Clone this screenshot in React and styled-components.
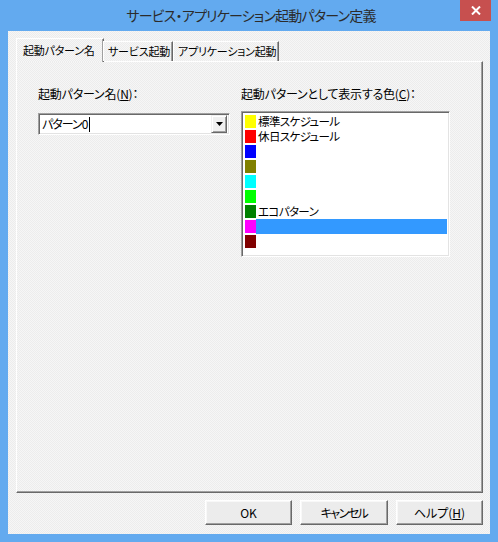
import React from 'react';
import styled, { createGlobalStyle } from 'styled-components';

const Global = createGlobalStyle`
  html, body { margin: 0; padding: 0; }
  body {
    width: 498px;
    height: 542px;
    overflow: hidden;
    font-family: "Noto Sans CJK JP", "Liberation Sans", sans-serif;
    font-feature-settings: "palt";
  }
`

const checker = `repeating-conic-gradient(#ececec 0 25%, #f6f6f6 0 50%) 0 0 / 2px 2px`

const Window = styled.div`
  width: 498px;
  height: 542px;
  box-sizing: border-box;
  background: #63aaef;
  display: flex;
  flex-direction: column;
  padding: 0 8px 8px 8px;
`

const TitleBar = styled.div`
  height: 31px;
  display: grid;
  grid-template-columns: 1fr auto 1fr;
  align-items: start;
  margin: 0 -8px;
`

const Title = styled.div`
  grid-column: 2;
  font-size: 14px;
  line-height: 15px;
  letter-spacing: -0.8px;
  color: #2b2b2b;
  padding-top: 8px;
  padding-left: 4px;
  white-space: nowrap;
`

const Close = styled.div`
  grid-column: 3;
  justify-self: end;
  margin-right: 7px;
  width: 31px;
  height: 21px;
  background: #c7504f;
  display: flex;
  align-items: center;
  justify-content: center;
`

const Client = styled.div`
  flex: 1;
  background: ${checker};
  display: flex;
  flex-direction: column;
  padding: 7px 7px 0 8px;
`

const TabStrip = styled.div`
  display: flex;
  align-items: flex-end;
  height: 24px;
  padding-left: 1px;
  position: relative;
  z-index: 1;
`

const Tab = styled.div`
  box-sizing: border-box;
  height: ${p => (p.active ? '24px' : '20px')};
  width: ${p => p.w}px;
  margin: ${p => (p.active ? '0 -1px 0 -1px' : '0 0 1px 0')};
  padding-left: ${p => (p.active ? 6 : 4)}px;
  border-top: 1px solid #fff;
  border-left: 1px solid #fff;
  border-right: 1px solid #696969;
  box-shadow: inset -1px 0 0 #a0a0a0;
  background: ${p => (p.active ? checker : 'transparent')};
  font-size: 11px;
  line-height: ${p => (p.active ? '22px' : '18px')};
  letter-spacing: -0.2px;
  color: #000;
  white-space: nowrap;
`

const Panel = styled.div`
  box-sizing: border-box;
  height: 432px;
  margin-top: -1px;
  border-top: 1px solid #fff;
  border-left: 1px solid #fff;
  border-right: 1px solid #696969;
  border-bottom: 1px solid #696969;
  box-shadow: inset -1px -1px 0 #a0a0a0;
  display: grid;
  grid-template-columns: 192px 209px;
  column-gap: 11px;
  align-items: start;
  padding: 24px 0 0 21px;
`

const Field = styled.div`
  display: flex;
  flex-direction: column;
`

const Label = styled.div`
  font-size: 12px;
  line-height: 16px;
  letter-spacing: -0.2px;
  color: #000;
  margin-bottom: ${p => p.gap}px;
  white-space: nowrap;
  u { text-decoration: underline; text-underline-offset: 1px; }
`

const Sunken = styled.div`
  box-sizing: border-box;
  background: #fff;
  border-top: 1px solid #a0a0a0;
  border-left: 1px solid #a0a0a0;
  border-right: 1px solid #fff;
  border-bottom: 1px solid #fff;
  box-shadow: inset 1px 1px 0 #696969, inset -1px -1px 0 #e3e3e3;
`

const Combo = styled(Sunken)`
  height: 22px;
  display: flex;
  align-items: center;
  padding: 2px 2px 2px 3px;
`

const ComboText = styled.div`
  flex: 1;
  font-size: 12px;
  line-height: 16px;
  letter-spacing: -1px;
  color: #000;
  display: flex;
  align-items: center;
`

const Caret = styled.span`
  display: inline-block;
  width: 1px;
  height: 15px;
  background: #000;
  margin-left: 2px;
`

const DropButton = styled.div`
  box-sizing: border-box;
  width: 16px;
  height: 18px;
  background: #f0f0f0;
  border-top: 1px solid #f0f0f0;
  border-left: 1px solid #f0f0f0;
  border-right: 1px solid #696969;
  border-bottom: 1px solid #696969;
  box-shadow: inset 1px 1px 0 #fff, inset -1px -1px 0 #a0a0a0;
  display: flex;
  align-items: center;
  justify-content: center;
`

const ListBox = styled(Sunken)`
  height: 146px;
  padding: 2px 2px 0 3px;
  display: flex;
  flex-direction: column;
`

const Item = styled.div`
  height: 15px;
  display: flex;
  align-items: center;
  overflow: hidden;
`

const Swatch = styled.div`
  width: 11px;
  height: 13px;
  background: ${p => p.color};
  flex: none;
`

const ItemText = styled.div`
  flex: 1;
  height: 15px;
  padding-left: 2px;
  background: ${p => (p.selected ? '#3399ff' : 'transparent')};
  font-size: 11.5px;
  line-height: 15px;
  letter-spacing: -0.6px;
  color: #000;
  white-space: nowrap;
  overflow: hidden;
`

const ButtonRow = styled.div`
  display: flex;
  justify-content: flex-end;
  gap: 8px;
  padding-top: 7px;
`

const Button = styled.div`
  box-sizing: border-box;
  width: ${p => p.w}px;
  height: 25px;
  background: #ececec;
  border-top: 1px solid #fff;
  border-left: 1px solid #fff;
  border-right: 1px solid #696969;
  border-bottom: 1px solid #696969;
  box-shadow: inset -1px -1px 0 #a0a0a0, inset 1px 1px 0 #f8f8f8;
  display: flex;
  align-items: center;
  justify-content: center;
  font-size: 12px;
  letter-spacing: ${p => (p.tight ? '-1.5px' : '0')};
  color: #000;
  u { text-decoration: underline; text-underline-offset: 1px; }
`

const items = [
  { color: '#ffff00', text: '標準スケジュール' },
  { color: '#ff0000', text: '休日スケジュール' },
  { color: '#0000ff', text: '' },
  { color: '#808000', text: '' },
  { color: '#00ffff', text: '' },
  { color: '#00ff00', text: '' },
  { color: '#008000', text: 'エコパターン' },
  { color: '#ff00ff', text: '', selected: true },
  { color: '#800000', text: '' },
]

export default function App() {
  return (
    <Window>
      <Global />
      <TitleBar>
        <Title>サービス・アプリケーション起動パターン定義</Title>
        <Close>
          <svg width="10" height="9" viewBox="0 0 10 9">
            <path d="M1 0.5 L9 8.5 M9 0.5 L1 8.5" stroke="#fff" strokeWidth="2" />
          </svg>
        </Close>
      </TitleBar>
      <Client>
        <TabStrip>
          <Tab active w={88}>起動パターン名</Tab>
          <Tab w={70}>サービス起動</Tab>
          <Tab w={106}>アプリケーション起動</Tab>
        </TabStrip>
        <Panel>
          <Field>
            <Label gap={11}>起動パターン名(<u>N</u>)：</Label>
            <Combo>
              <ComboText>パターン0<Caret /></ComboText>
              <DropButton>
                <svg width="7" height="4" viewBox="0 0 7 4">
                  <path d="M0 0 H7 L3.5 4 Z" fill="#000" />
                </svg>
              </DropButton>
            </Combo>
          </Field>
          <Field>
            <Label gap={9}>起動パターンとして表示する色(<u>C</u>)：</Label>
            <ListBox>
              {items.map((it, i) => (
                <Item key={i}>
                  <Swatch color={it.color} />
                  <ItemText selected={it.selected}>{it.text}</ItemText>
                </Item>
              ))}
            </ListBox>
          </Field>
        </Panel>
        <ButtonRow>
          <Button w={87}>OK</Button>
          <Button w={88} tight>キャンセル</Button>
          <Button w={87}>ヘルプ(<u>H</u>)</Button>
        </ButtonRow>
      </Client>
    </Window>
  );
}
